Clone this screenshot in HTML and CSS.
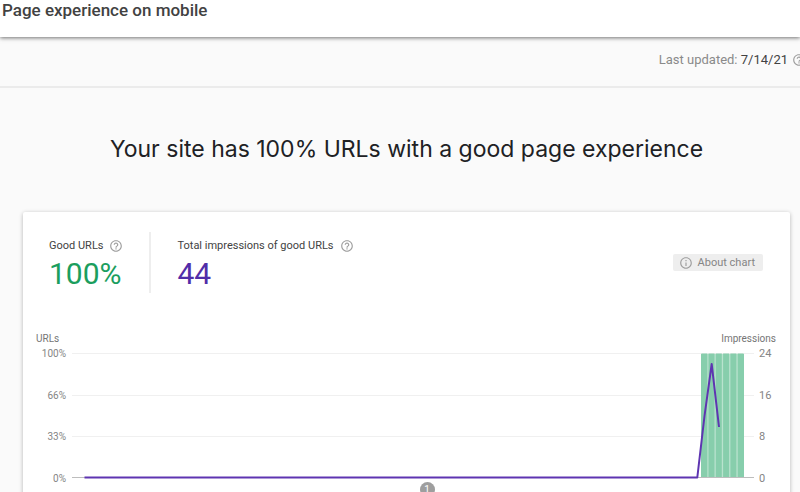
FILE: index.html
```html
<!DOCTYPE html>
<html lang="en">
<head>
<meta charset="utf-8">
<title>Page experience on mobile</title>
<link rel="stylesheet" href="styles.css">
</head>
<body>
<svg class="symbols" aria-hidden="true">
  <symbol id="help" viewBox="0 0 24 24"><path fill="currentColor" d="M11 18h2v-2h-2v2zm1-16C6.480 2 2 6.480 2 12s4.480 10 10 10 10-4.480 10-10S17.520 2 12 2zm0 18c-4.410 0-8-3.590-8-8s3.590-8 8-8 8 3.590 8 8-3.590 8-8 8zm0-14c-2.210 0-4 1.790-4 4h2c0-1.100.9-2 2-2s2 .9 2 2c0 2-3 1.750-3 5h2c0-2.250 3-2.500 3-5 0-2.210-1.790-4-4-4z"/></symbol>
  <symbol id="info" viewBox="0 0 24 24"><path fill="currentColor" d="M11 7h2v2h-2zm0 4h2v6h-2zm1-9C6.480 2 2 6.480 2 12s4.480 10 10 10 10-4.480 10-10S17.520 2 12 2zm0 18c-4.410 0-8-3.590-8-8s3.590-8 8-8 8 3.590 8 8-3.590 8-8 8z"/></symbol>
</svg>
<header class="topbar"><h1 class="topbar-title">Page experience on mobile</h1></header>
<div class="updated">
  <span>Last updated: <time class="date" datetime="2021-07-14">7/14/21</time></span>
  <svg class="icon"><use href="#help"/></svg>
</div>
<main class="content">
  <h2 class="headline">Your site has 100% URLs with a good page experience</h2>
  <section class="card">
    <div class="summary">
      <div class="metric">
        <div class="metric-label">Good URLs <svg class="icon"><use href="#help"/></svg></div>
        <div class="metric-value good">100%</div>
      </div>
      <div class="metric">
        <div class="metric-label">Total impressions of good URLs <svg class="icon"><use href="#help"/></svg></div>
        <div class="metric-value impressions">44</div>
      </div>
      <button class="about" type="button"><svg class="icon"><use href="#info"/></svg>About chart</button>
    </div>
    <div class="axis-titles"><span>URLs</span><span>Impressions</span></div>
    <div class="chart">
      <div class="ticks left"><span>100%</span><span>66%</span><span>33%</span><span>0%</span></div>
      <div class="plot-area">
        <svg class="plot" viewBox="0 0 682 125" preserveAspectRatio="none">
          <path class="grid" d="M0 .5H682M0 42.500H682M0 83.500H682"/>
          <path class="baseline" d="M0 124.500H682"/>
          <rect class="bar-bed" x="629" y="1" width="43" height="123"/>
          <path class="bars" d="M629 1.500q0-1 1-1h5.300V124H629zM636.500.5h6V124h-6zM643.800.5h6V124h-6zM651.100.5h6V124h-6zM658.400.5h6V124h-6zM665.700.5h5.300q1 0 1 1V124h-6.300z"/>
          <path class="line" d="M12.500 124.500H625.300L632.500 63 639.700 11 647 74"/>
        </svg>
        <span class="marker">1</span>
      </div>
      <div class="ticks right"><span>24</span><span>16</span><span>8</span><span>0</span></div>
    </div>
  </section>
</main>
</body>
</html>
```
FILE: styles.css
```css
* { box-sizing: border-box; }
body {
  margin: 0;
  height: 100vh;
  overflow: hidden;
  background: #fafafa;
  color: #424242;
  font-family: Roboto, "Liberation Sans", sans-serif;
  font-size: 11px;
}
.symbols { position: absolute; width: 0; height: 0; }
h1, h2 { margin: 0; }
.icon { width: 14px; height: 14px; flex: none; color: #9e9e9e; }
.topbar {
  height: 37px;
  padding: 0 2px;
  background: #fff;
  box-shadow: 0 1px 4px rgba(0, 0, 0, .55);
}
.topbar-title { font-size: 17px; font-weight: 500; line-height: 20px; }
.updated {
  display: flex;
  justify-content: flex-end;
  align-items: center;
  gap: 4px;
  height: 51px;
  padding-bottom: 4px;
  margin-right: -6px;
  border-bottom: 2px solid #ebebeb;
  color: #8a8a8a;
  font-size: 13px;
  line-height: 16px;
}
.date { color: #424242; }
.content { padding: 43px 10px 0 23px; }
.headline {
  color: #202124;
  font-family: Inter, "Open Sans", sans-serif;
  font-size: 23px;
  font-weight: 400;
  line-height: 36px;
  text-align: center;
}
.card {
  min-height: 320px;
  margin-top: 45px;
  padding-top: 20px;
  border-radius: 2px;
  background: #fff;
  box-shadow: 0 1px 4px rgba(0, 0, 0, .28);
}
.summary { display: flex; align-items: center; padding: 0 27px 0 0; }
.metric { height: 61px; padding: 6px 26px 0; }
.metric + .metric { border-left: 2px solid #eee; }
.metric-label { display: flex; align-items: center; gap: 6px; line-height: 16px; }
.metric-value { margin-top: 2px; font-size: 30px; line-height: 36px; }
.good { color: #1b9e5e; }
.impressions { color: #512da8; }
.about {
  display: flex;
  align-items: center;
  gap: 5px;
  height: 17px;
  margin-left: auto;
  padding: 0 8px 0 6px;
  border: 0;
  border-radius: 2px;
  background: #eee;
  color: #858585;
  font: inherit;
}
.axis-titles {
  display: flex;
  justify-content: space-between;
  margin-top: 38px;
  padding: 0 14px 0 13px;
  color: #757575;
  font-size: 10px;
  line-height: 16px;
}
.chart { display: flex; color: #858585; font-size: 10px; line-height: 14px; }
.ticks { display: flex; flex-direction: column; justify-content: space-between; height: 139px; }
.left { width: 49px; padding-right: 6px; text-align: right; }
.right { width: 36px; padding-left: 5px; font-size: 11px; }
.plot-area { position: relative; flex: 1; min-width: 0; padding-top: 6px; }
.plot { display: block; width: 100%; height: 125px; overflow: visible; }
.grid, .baseline { fill: none; stroke: #f0f0f0; stroke-width: 1; }
.baseline { stroke: #bdbdbd; }
.bar-bed { fill: #b9e3ce; }
.bars { fill: #87ceac; }
.line { fill: none; stroke: #5e35b1; stroke-width: 2; stroke-linejoin: round; }
.marker {
  position: absolute;
  top: 135px;
  left: 52%;
  width: 15px;
  height: 15px;
  margin-left: -7px;
  border-radius: 50%;
  background: #9e9e9e;
  color: #fff;
  line-height: 15px;
  text-align: center;
}
```
